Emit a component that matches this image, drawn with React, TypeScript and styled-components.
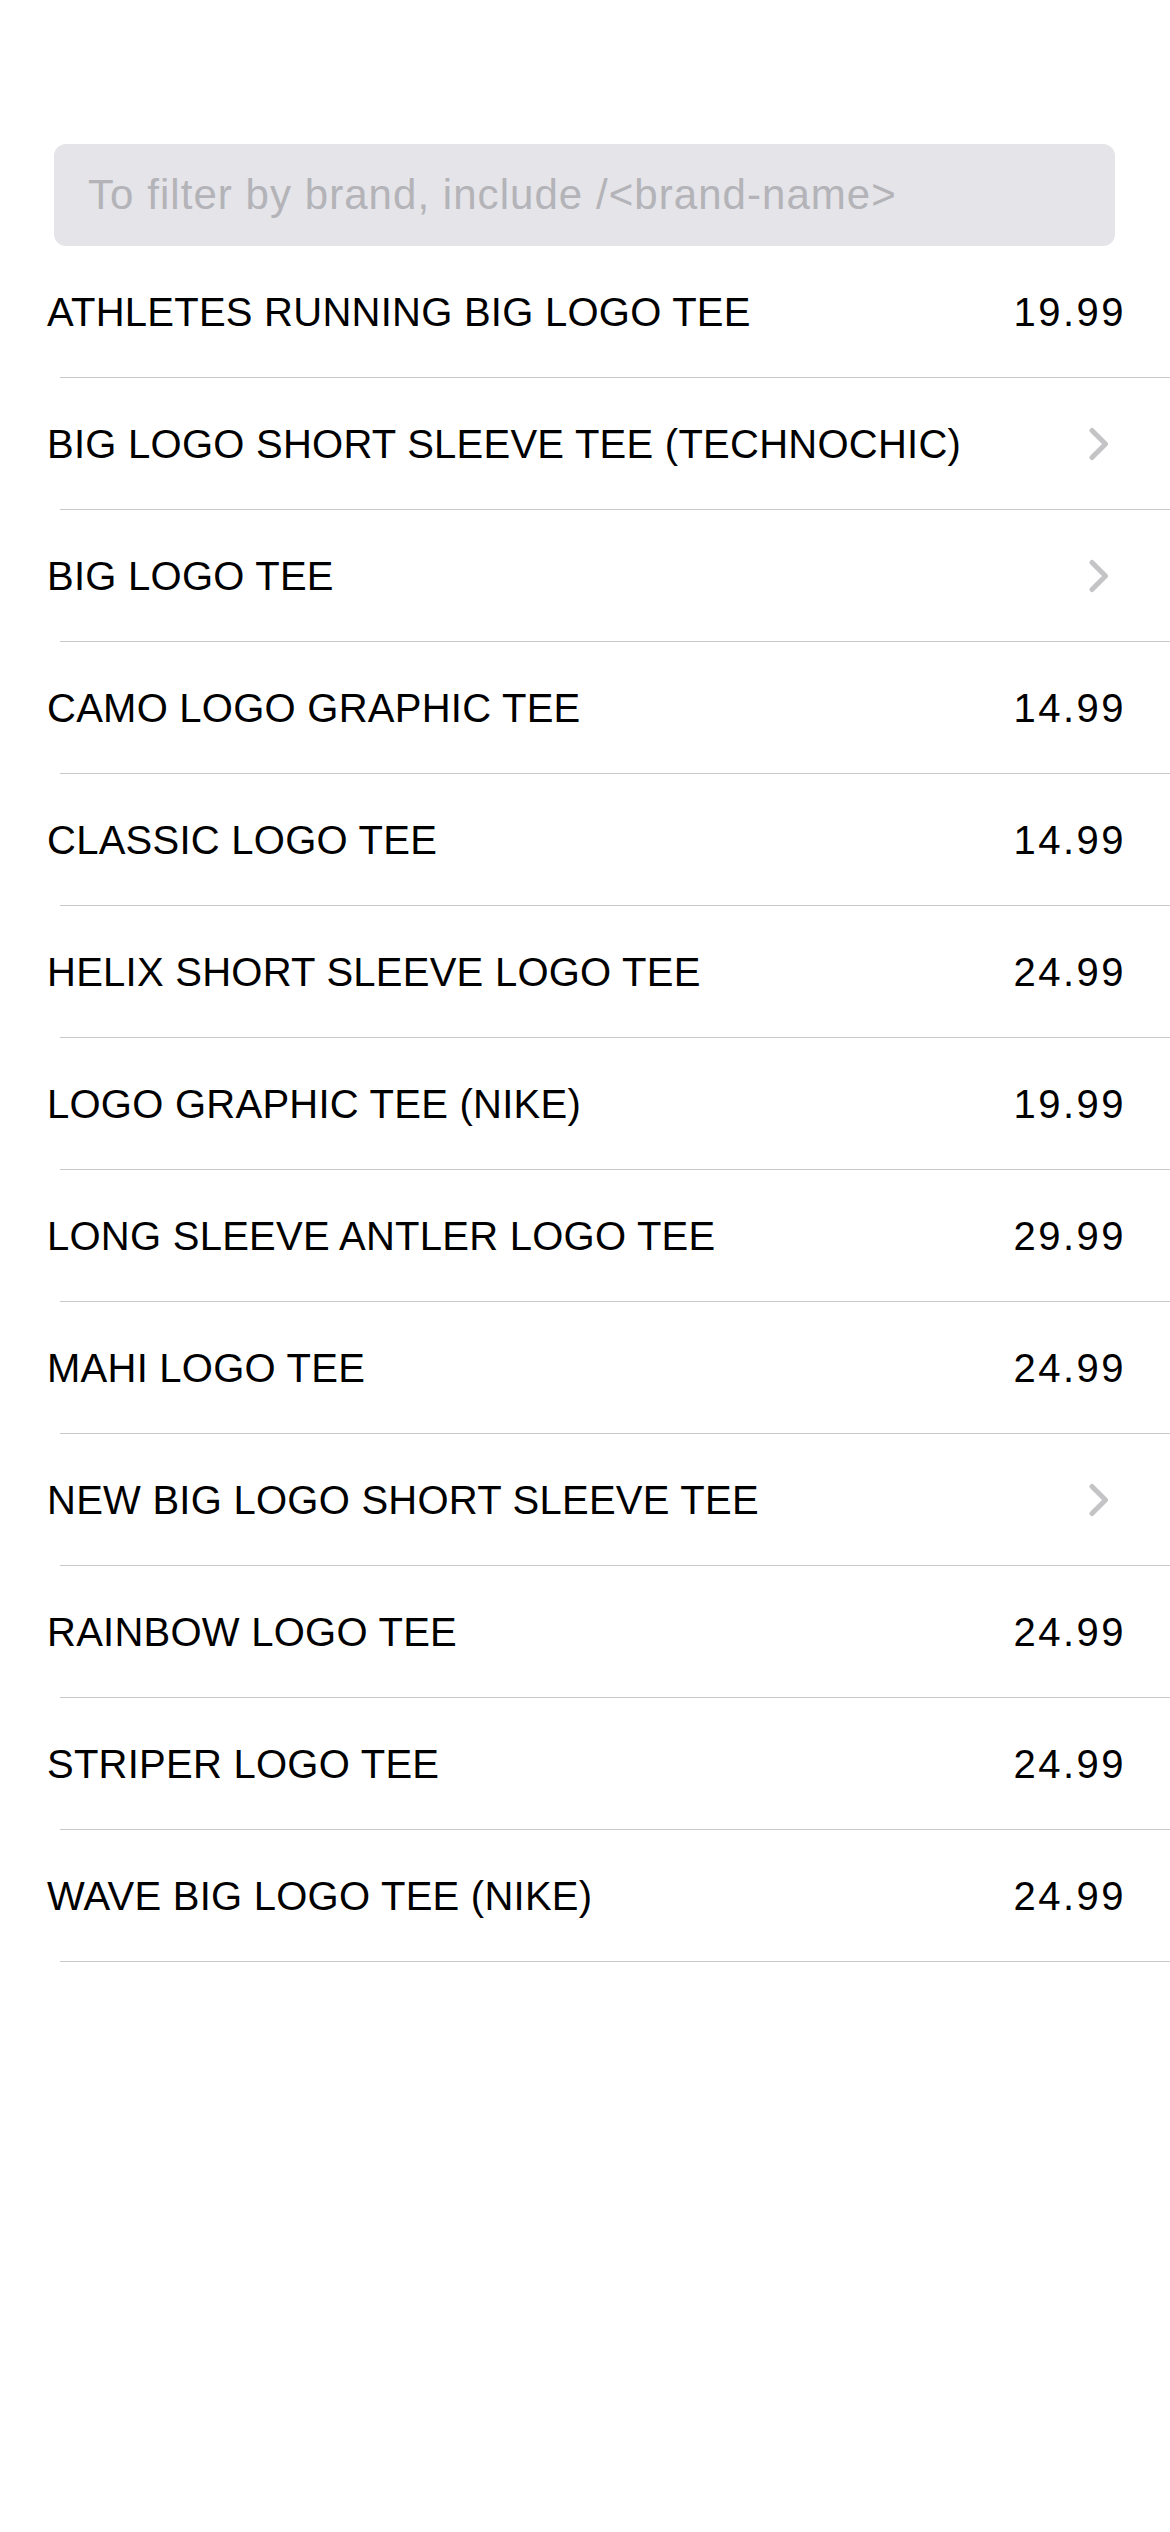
import React from 'react';
import styled, { createGlobalStyle } from 'styled-components';

const GlobalStyle = createGlobalStyle`
  body {
    margin: 0;
    background: #ffffff;
    font-family: 'Liberation Sans', Arial, sans-serif;
  }
`;

const Screen = styled.div`
  width: 1170px;
  min-height: 2532px;
  background: #ffffff;
  padding-top: 144px;
  box-sizing: border-box;
`;

const SearchBox = styled.div`
  margin: 0 55px 0 54px;
  height: 102px;
  border-radius: 12px;
  background: #e4e4e9;
  display: flex;
  align-items: center;
  padding-left: 34px;
  box-sizing: border-box;
`;

const SearchInput = styled.input`
  border: none;
  outline: none;
  background: transparent;
  width: 100%;
  font-family: inherit;
  font-size: 42px;
  letter-spacing: 1.05px;
  color: #000;
  padding: 0;
  &::placeholder {
    color: #b3b3b8;
  }
`;

const List = styled.ul`
  list-style: none;
  margin: 0;
  padding: 0;
`;

const Row = styled.li`
  height: 132px;
  display: flex;
  align-items: center;
  justify-content: space-between;
  padding: 0 44px 0 47px;
  box-sizing: border-box;
  background: linear-gradient(#c8c7cc, #c8c7cc) no-repeat 60px 100% / calc(100% - 60px) 1px;
`;

const Name = styled.span`
  font-size: 40px;
  letter-spacing: 0.25px;
  color: #000;
  white-space: nowrap;
`;

const Price = styled.span`
  font-size: 40px;
  letter-spacing: 2.5px;
  color: #000;
`;

const Chevron = styled.svg`
  width: 22px;
  height: 34px;
  margin-right: 16px;
`;

interface IProduct {
  name: string;
  price?: string;
}

const products: IProduct[] = [
  { name: 'ATHLETES RUNNING BIG LOGO TEE', price: '19.99' },
  { name: 'BIG LOGO SHORT SLEEVE TEE (TECHNOCHIC)' },
  { name: 'BIG LOGO TEE' },
  { name: 'CAMO LOGO GRAPHIC TEE', price: '14.99' },
  { name: 'CLASSIC LOGO TEE', price: '14.99' },
  { name: 'HELIX SHORT SLEEVE LOGO TEE', price: '24.99' },
  { name: 'LOGO GRAPHIC TEE (NIKE)', price: '19.99' },
  { name: 'LONG SLEEVE ANTLER LOGO TEE', price: '29.99' },
  { name: 'MAHI LOGO TEE', price: '24.99' },
  { name: 'NEW BIG LOGO SHORT SLEEVE TEE' },
  { name: 'RAINBOW LOGO TEE', price: '24.99' },
  { name: 'STRIPER LOGO TEE', price: '24.99' },
  { name: 'WAVE BIG LOGO TEE (NIKE)', price: '24.99' },
];

const App = () => {
  return (
    <Screen>
      <GlobalStyle />
      <SearchBox>
        <SearchInput placeholder="To filter by brand, include /<brand-name>" />
      </SearchBox>
      <List>
        {products.map((product) => (
          <Row key={product.name}>
            <Name>{product.name}</Name>
            {product.price ? (
              <Price>{product.price}</Price>
            ) : (
              <Chevron viewBox="0 0 22 34">
                <polyline
                  points="4,3.5 17.5,17 4,30.5"
                  fill="none"
                  stroke="#c4c4c7"
                  strokeWidth="5"
                  strokeLinecap="round"
                  strokeLinejoin="round"
                />
              </Chevron>
            )}
          </Row>
        ))}
      </List>
    </Screen>
  );
};

export default App;
